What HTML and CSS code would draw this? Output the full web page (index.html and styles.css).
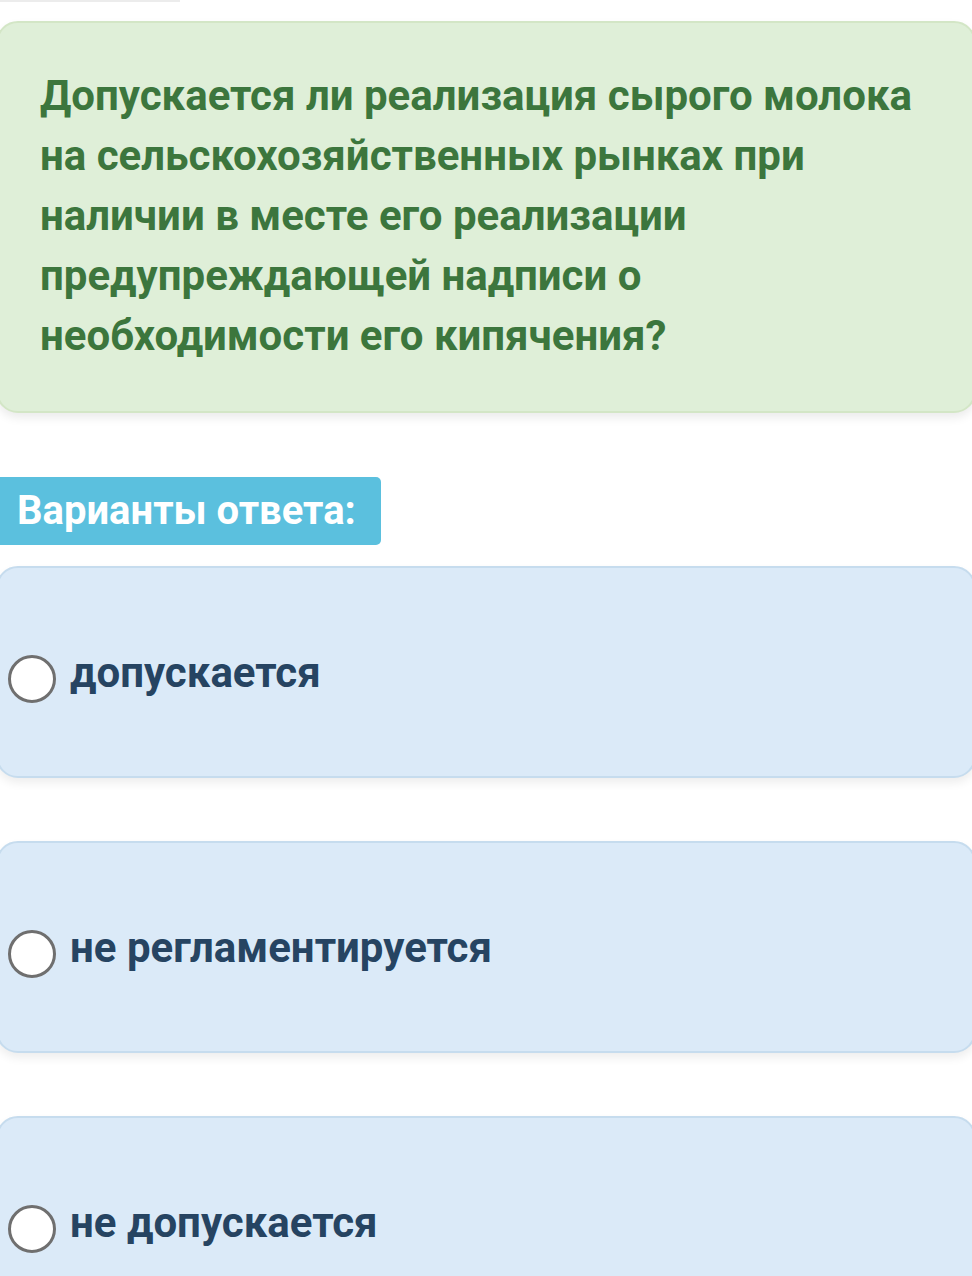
FILE: index.html
```html
<!DOCTYPE html>
<html lang="ru">
<head>
    <meta charset="UTF-8">
    <meta name="viewport" content="width=device-width, initial-scale=1.0">
    <title>Вопрос теста</title>
    <link rel="stylesheet" href="styles.css">
</head>
<body>
    <div class="top-rule"></div>

    <div class="question">
        Допускается ли реализация сырого молока на сельскохозяйственных рынках при наличии в месте его реализации предупреждающей надписи о необходимости его кипячения?
    </div>

    <div class="answers-label">Варианты ответа:</div>

    <label class="answer">
        <span class="radio"></span>
        <span class="answer-text">допускается</span>
    </label>
    <label class="answer">
        <span class="radio"></span>
        <span class="answer-text">не регламентируется</span>
    </label>
    <label class="answer">
        <span class="radio"></span>
        <span class="answer-text">не допускается</span>
    </label>
</body>
</html>
```

FILE: styles.css
```css
body {
    font-family: 'Roboto', 'Noto Sans', sans-serif;
    margin: 0;
    background: #fff;
    overflow: hidden;
}
.top-rule {
    width: 180px;
    height: 2px;
    background: #ececec;
}
.question {
    margin: 19px -4px 0;
    padding: 43px 40px 45px 42px;
    background: #dfefd8;
    border: 2px solid #d3e6c6;
    border-radius: 22px;
    box-shadow: 0 5px 10px rgba(0, 0, 0, 0.08);
    color: #3c763d;
    font-size: 42px;
    font-weight: 700;
    line-height: 60px;
}
.answers-label {
    display: inline-block;
    margin-top: 64px;
    height: 68px;
    line-height: 68px;
    padding: 0 25px 0 17px;
    background: #5bc0de;
    border-radius: 0 5px 5px 0;
    color: #fff;
    font-size: 40px;
    font-weight: 700;
}
.answer {
    display: flex;
    align-items: center;
    height: 208px;
    margin: 21px -4px 0;
    padding: 0 4px;
    background: #dbeaf8;
    border: 2px solid #c6dcee;
    border-radius: 22px;
    box-shadow: 0 5px 10px rgba(0, 0, 0, 0.07);
}
.answer + .answer {
    margin-top: 63px;
}
.radio {
    width: 42px;
    height: 42px;
    margin: 14px 0 0 6px;
    border: 3px solid #6f6f6f;
    border-radius: 50%;
    background: #fff;
    flex-shrink: 0;
}
.answer-text {
    margin-left: 14px;
    color: #264462;
    font-size: 42px;
    font-weight: 700;
}
```
